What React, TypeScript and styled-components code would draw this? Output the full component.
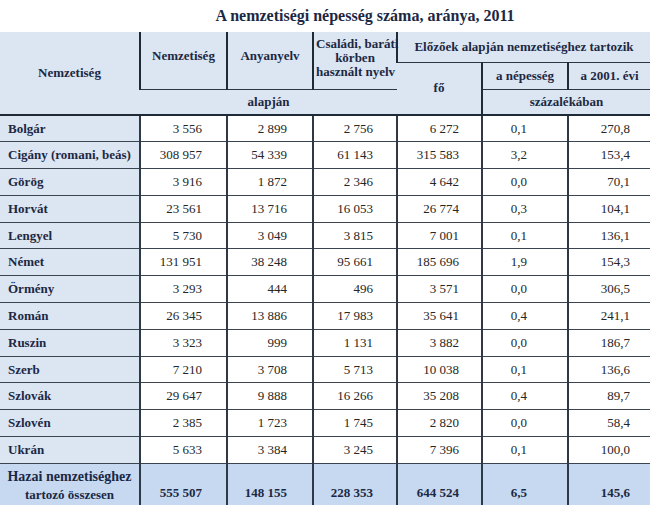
import { createGlobalStyle, styled } from "styled-components";

const GlobalStyle = createGlobalStyle`
  html, body {
    margin: 0;
    padding: 0;
    background: #fff;
  }
  body, table {
    font-family: "Liberation Serif", "Times New Roman", serif;
  }
`;

const Page = styled.div`
  width: 650px;
  height: 506px;
  overflow: hidden;
  background: #fff;
`;

const Title = styled.h1`
  margin: 0;
  height: 32px;
  padding-left: 80px;
  box-sizing: border-box;
  display: flex;
  align-items: center;
  justify-content: center;
  font-size: 16px;
  font-weight: 700;
  color: #1c2843;
`;

const Table = styled.table`
  width: 650px;
  table-layout: fixed;
  border-collapse: collapse;
  font-family: "Liberation Serif", "Times New Roman", serif;
  font-size: 13px;
`;

const HeadRow = styled.tr<{ $h: number }>`
  height: ${(p) => p.$h}px;
`;

const Th = styled.th<{ $line?: boolean; $bottom?: boolean; $pad?: number }>`
  background: #dce6f2;
  color: #1c2843;
  font-weight: 700;
  text-align: center;
  vertical-align: middle;
  line-height: 14px;
  padding: 0 2px ${(p) => p.$pad ?? 0}px;
  white-space: nowrap;
  border-left: 2px solid #1e2a38;
  border-bottom: ${(p) => (p.$bottom ? "2px solid #1e2a38" : p.$line ? "1.5px solid #2a3644" : "none")};
  &:first-child {
    border-left: none;
  }
`;

const Row = styled.tr`
  height: 26.8px;
`;

const NameCell = styled.td`
  background: #dce6f2;
  color: #1c2843;
  font-weight: 700;
  padding: 0 0 0 8px;
  white-space: nowrap;
  border-bottom: 1.5px solid #3a4350;
`;

const NumCell = styled.td<{ $pr: number }>`
  color: #262626;
  text-align: right;
  padding: 0 ${(p) => p.$pr}px 0 0;
  white-space: nowrap;
  border-left: 2px solid #2f3945;
  border-bottom: 1.5px solid #3a4350;
`;

const TotalRow = styled.tr`
  height: 42px;
  background: #c6d9f1;
`;

const TotalName = styled.td`
  color: #1c2843;
  font-weight: 700;
  text-align: center;
  line-height: 18px;
  font-size: 14px;
  padding: 2px 0 0;
  white-space: nowrap;
`;

const TotalSub = styled.span`
  font-size: 13px;
`;

const TotalNum = styled.td<{ $pr: number }>`
  color: #1c2843;
  font-weight: 700;
  text-align: right;
  vertical-align: bottom;
  padding: 0 ${(p) => p.$pr}px 4px 0;
  border-left: 2px solid #2f3945;
`;

const widths = [140, 87, 86, 84, 85, 86, 82];
const pads = [24, 25, 23, 22, 40, 20];

const rows: [string, string, string, string, string, string, string][] = [
  ["Bolgár", "3 556", "2 899", "2 756", "6 272", "0,1", "270,8"],
  ["Cigány (romani, beás)", "308 957", "54 339", "61 143", "315 583", "3,2", "153,4"],
  ["Görög", "3 916", "1 872", "2 346", "4 642", "0,0", "70,1"],
  ["Horvát", "23 561", "13 716", "16 053", "26 774", "0,3", "104,1"],
  ["Lengyel", "5 730", "3 049", "3 815", "7 001", "0,1", "136,1"],
  ["Német", "131 951", "38 248", "95 661", "185 696", "1,9", "154,3"],
  ["Örmény", "3 293", "444", "496", "3 571", "0,0", "306,5"],
  ["Román", "26 345", "13 886", "17 983", "35 641", "0,4", "241,1"],
  ["Ruszin", "3 323", "999", "1 131", "3 882", "0,0", "186,7"],
  ["Szerb", "7 210", "3 708", "5 713", "10 038", "0,1", "136,6"],
  ["Szlovák", "29 647", "9 888", "16 266", "35 208", "0,4", "89,7"],
  ["Szlovén", "2 385", "1 723", "1 745", "2 820", "0,0", "58,4"],
  ["Ukrán", "5 633", "3 384", "3 245", "7 396", "0,1", "100,0"],
];

const total = ["555 507", "148 155", "228 353", "644 524", "6,5", "145,6"];

export default function App() {
  return (
    <Page>
      <GlobalStyle />
      <Title>A nemzetiségi népesség száma, aránya, 2011</Title>
      <Table>
        <colgroup>
          {widths.map((w, i) => (
            <col key={i} style={{ width: w }} />
          ))}
        </colgroup>
        <thead>
          <HeadRow $h={30}>
            <Th rowSpan={3} $bottom>
              Nemzetiség
            </Th>
            <Th rowSpan={2} $line $pad={8}>
              Nemzetiség
            </Th>
            <Th rowSpan={2} $line $pad={8}>
              Anyanyelv
            </Th>
            <Th rowSpan={2} $line $pad={4}>
              Családi, baráti
              <br />
              körben
              <br />
              használt nyelv
            </Th>
            <Th colSpan={3} $line>
              Előzőek alapján nemzetiséghez tartozik
            </Th>
          </HeadRow>
          <HeadRow $h={27}>
            <Th rowSpan={2} $bottom>
              fő
            </Th>
            <Th $line>a népesség</Th>
            <Th $line>a 2001. évi</Th>
          </HeadRow>
          <HeadRow $h={26}>
            <Th colSpan={3} $bottom>
              alapján
            </Th>
            <Th colSpan={2} $bottom>
              százalékában
            </Th>
          </HeadRow>
        </thead>
        <tbody>
          {rows.map(([name, ...nums]) => (
            <Row key={name}>
              <NameCell>{name}</NameCell>
              {nums.map((n, i) => (
                <NumCell key={i} $pr={pads[i]}>
                  {n}
                </NumCell>
              ))}
            </Row>
          ))}
          <TotalRow>
            <TotalName>
              Hazai nemzetiséghez
              <br />
              <TotalSub>tartozó összesen</TotalSub>
            </TotalName>
            {total.map((n, i) => (
              <TotalNum key={i} $pr={pads[i]}>
                {n}
              </TotalNum>
            ))}
          </TotalRow>
        </tbody>
      </Table>
    </Page>
  );
}
